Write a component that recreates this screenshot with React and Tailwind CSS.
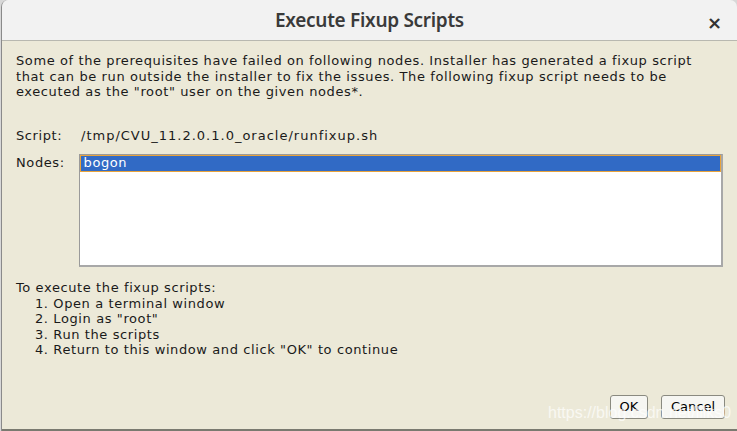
import React from 'react';

const steps = [
  '1. Open a terminal window',
  '2. Login as "root"',
  '3. Run the scripts',
  '4. Return to this window and click "OK" to continue',
];

export default function App() {
  return (
    <div className="w-[737px] h-[431px] bg-[#d8d8d8] overflow-hidden">
      <div className="relative flex flex-col h-[431px] ml-[1px] border-l border-[#8a8a8a] rounded-tl-[7px] rounded-tr-[7px] overflow-hidden">
        {/* title bar */}
        <div className="relative h-[41px] shrink-0 bg-[#f2f2f2] border-b border-[#b8b8b0] flex items-center justify-center">
          <span className="text-[19px] font-semibold text-[#3a3a3a] [font-family:'Noto_Sans',sans-serif] tracking-[-0.3px]">
            Execute Fixup Scripts
          </span>
          <span className="absolute right-[15px] top-[9px] text-[18px] font-bold text-[#333] [font-family:'DejaVu_Sans',sans-serif]">×</span>
        </div>

        {/* body */}
        <div className="flex-1 bg-[#ece9d8] border-b-2 border-[#7a7a70] px-[14px] pt-[12px] [font-family:'DejaVu_Sans',sans-serif] text-[13px] tracking-[0.6px] text-[#1a1a1a] leading-[15.5px]">
          <p>
            Some of the prerequisites have failed on following nodes. Installer has generated a fixup script<br />
            that can be run outside the installer to fix the issues. The following fixup script needs to be<br />
            executed as the "root" user on the given nodes*.
          </p>

          <div className="flex mt-[28px]">
            <span className="w-[65px]">Script:</span>
            <span className="tracking-[1px]">/tmp/CVU_11.2.0.1.0_oracle/runfixup.sh</span>
          </div>

          <div className="flex mt-[11px]">
            <span className="w-[63px] pt-[1px]">Nodes:</span>
            <div className="w-[649px] h-[113px] bg-white border border-[#9a9a9a] border-r-2 border-b-2 border-r-[#a8a8a8] border-b-[#a8a8a8]">
              <div className="h-[17px] bg-[#316ac5] border border-[#e8a33b] text-white pl-[3px] leading-[14px]">bogon</div>
            </div>
          </div>

          <div className="mt-[13px]">
            <p>To execute the fixup scripts:</p>
            <div className="pl-[19px]">
              {steps.map(s => (
                <p key={s}>{s}</p>
              ))}
            </div>
          </div>

          <div className="flex justify-end gap-[13px] mt-[37px] mr-[-2px]">
            <button className="w-[38px] h-[24px] rounded-[3px] border border-[#8a8a80] bg-[#f6f6f2] text-[13px] tracking-normal text-black">OK</button>
            <button className="w-[64px] h-[24px] rounded-[3px] border border-[#8a8a80] bg-[#f6f6f2] text-[13px] tracking-normal text-black">Cancel</button>
          </div>
        </div>

        <span className="absolute left-[546px] top-[401px] text-[16px] text-white/70 [font-family:'Liberation_Sans',sans-serif] pointer-events-none">
          https://blog.csdn.net/lilks0
        </span>
      </div>
    </div>
  );
}
